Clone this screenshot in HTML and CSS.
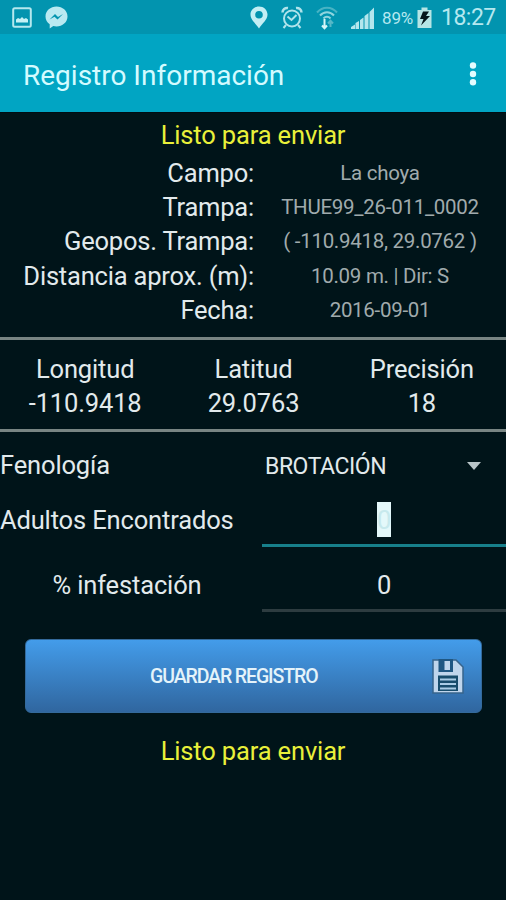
FILE: index.html
```html
<!DOCTYPE html>
<html lang="es">
	<head>
		<meta charset="utf-8">
		<title>Registro Información</title>
		<link rel="stylesheet" href="styles.css">
	</head>
	<body>
		<div class="statusBar">
			<svg class="picture" width="20" height="21" viewBox="0 0 20 21">
				<rect x="1.2" y="1.2" width="17.6" height="18.6" rx="1.5" fill="none" stroke="#b5e8ee" stroke-width="2"/>
				<path d="M4 15.500v-3l2-1.500 2 1 2-2 2 2 2-1 2 1.500v3z" fill="#c5f1f5"/>
			</svg>
			<svg class="messenger" width="23" height="23" viewBox="0 0 23 23">
				<path d="M11.500.5C5.500.5.500 4.800.500 10.400c0 3.200 1.600 6 4.200 7.800V22.500l3.600-2.500c1 .3 2 .4 3.200.4 6 0 11-4.400 11-10S17.500.5 11.500.5z" fill="#b9e9f1"/>
				<path d="M4.500 13.500l5.500-5.500 3 3 5-3-5.500 5.500-3-2.800z" fill="#0294af"/>
			</svg>
			<div class="spacer"></div>
			<svg class="pin" width="18" height="23" viewBox="0 0 18 23">
				<path fill-rule="evenodd" d="M9 .5C4.200.5.500 4 .500 8.600.500 14 5.500 17 9 22.500c3.500-5.500 8.500-8.500 8.500-13.900C17.500 4 13.800.5 9 .5zM9 5a3.800 3.800 0 1 1 0 7.600A3.800 3.800 0 0 1 9 5z" fill="#c3eef4"/>
			</svg>
			<svg class="alarm" width="22" height="23" viewBox="0 0 22 23" fill="none" stroke="#b0e3eb" stroke-width="2">
				<circle cx="11" cy="12.500" r="8"/>
				<path d="M1.500 6.500C1.500 3.500 4 1.500 7 2M20.500 6.500C20.500 3.500 18 1.500 15 2" stroke-width="2.500"/>
				<path d="M6.500 10.500l4 3.500 5-5M5 19l-2.500 3M17 19l2.500 3"/>
			</svg>
			<svg class="wifi" width="22" height="24" viewBox="0 0 22 24" fill="none" stroke="#8fd5df" stroke-width="2">
				<path d="M1 6.500C6.500 0 15.500 0 21 6.500" stroke="#48b3c4"/>
				<path d="M4 9.500C8 5 14 5 18 9.500M7.500 12.500c2-2.200 5-2.200 7 0"/>
				<path d="M8.500 13v9M6 19.500l2.500 2.700 2.500-2.700" stroke="#d5f6f8"/>
				<path d="M14.500 21v-6M12 17.500l2.500-2.700 2.500 2.700" stroke="#57b8c7"/>
			</svg>
			<svg class="signal" width="23" height="22" viewBox="0 0 23 22">
				<path d="M0 22v-2l4-2.500V22zM4.500 22v-6l3.500-2v8zM9 22v-9l3.500-2.500V22zM13.500 22V9L17.500 6v16zM18.500 22V5L23 .5V22z" fill="#b3e6ed"/>
			</svg>
			<span class="percent">89%</span>
			<svg class="battery" width="15" height="21" viewBox="0 0 15 21">
				<path d="M.500 3h4V.500h6V3h4v18H.500z" fill="#b5e5e5"/>
				<path d="M6 4.500h6L9 9h4L4 18.500 6.500 12H3z" fill="#05171c"/>
			</svg>
			<span class="clock">18:27</span>
		</div>
		<div class="toolbar">
			<h1 class="title">Registro Información</h1>
			<svg width="8" height="24" viewBox="0 0 8 24" fill="#e4fcff">
				<circle cx="4" cy="3.500" r="3.200"/>
				<circle cx="4" cy="12" r="3.200"/>
				<circle cx="4" cy="20.300" r="3.200"/>
			</svg>
		</div>

		<div class="message">Listo para enviar</div>
		<div class="info">
			<div class="label">Campo:</div>
			<div class="value">La choya</div>
			<div class="label">Trampa:</div>
			<div class="value">THUE99_26-011_0002</div>
			<div class="label">Geopos. Trampa:</div>
			<div class="value">( -110.9418, 29.0762 )</div>
			<div class="label">Distancia aprox. (m):</div>
			<div class="value">10.09 m. | Dir: S</div>
			<div class="label">Fecha:</div>
			<div class="value">2016-09-01</div>
		</div>

		<div class="position">
			<div>Longitud<br>-110.9418</div>
			<div>Latitud<br>29.0763</div>
			<div>Precisión<br>18</div>
		</div>

		<div class="form">
			<div class="row fenologia">
				<div class="name">Fenología</div>
				<div class="spinner">
					<span>BROTACIÓN</span>
					<div class="arrow"></div>
				</div>
			</div>
			<div class="row adultos">
				<div class="name">Adultos Encontrados</div>
				<div class="field focused"><span class="selected">0</span></div>
			</div>
			<div class="row infestacion">
				<div class="name centered">% infestación</div>
				<div class="field"><span>0</span></div>
			</div>
		</div>

		<button class="save" type="button">
			<span>GUARDAR REGISTRO</span>
			<svg width="32" height="35" viewBox="0 0 32 35">
				<path d="M1 1h23l7 7v26H1z" fill="#bfd5ec" stroke="#37648c" stroke-width="1.500"/>
				<path d="M6.500 0H21v13H6.500z" fill="#1f5783"/>
				<path d="M12.500 2h5.500v9h-5.500z" fill="#bfd5ec"/>
				<path d="M6 16.500h20V32H6z" fill="#174c6c"/>
				<path d="M8 20.500h16M8 25h16M8 29.500h16" stroke="#a9cce6" stroke-width="1.800"/>
			</svg>
		</button>
		<div class="message bottom">Listo para enviar</div>
	</body>
</html>
```

FILE: styles.css
```css
html, body {
	margin: 0;
	padding: 0;
	width: 100%;
	height: 100%;
	background: #001419;
	color: #e2eaec;
	font-family: Roboto, sans-serif;
	font-size: 25.5px;
	letter-spacing: -0.15px;
	overflow: hidden;
}

svg {
	display: block;
	flex: none;
}

.statusBar {
	display: flex;
	align-items: center;
	box-sizing: border-box;
	height: 34px;
	padding: 1px 10px 0 12px;
	background: #0294af;
	color: #b5e8ef;
}

.messenger {
	margin-left: 13px;
}

.spacer {
	flex: 1;
}

.alarm {
	margin-left: 13px;
}

.wifi {
	margin-left: 13px;
}

.signal {
	margin-left: 13px;
}

.percent {
	width: 32px;
	margin-left: 8px;
	font-size: 17px;
	white-space: nowrap;
}

.battery {
	margin-left: 3px;
}

.clock {
	width: 55px;
	margin-left: 9px;
	font-size: 23px;
	letter-spacing: -0.5px;
	white-space: nowrap;
}

.toolbar {
	display: flex;
	align-items: center;
	justify-content: space-between;
	box-sizing: border-box;
	height: 79px;
	padding: 1px 29px 0 23px;
	background: #01a5c3;
	border-bottom: 1px solid #000d12;
}

.title {
	margin: 0;
	padding-top: 3px;
	color: #d4fbff;
	font-size: 28px;
	font-weight: normal;
	letter-spacing: 0;
}

.message {
	height: 44px;
	color: #e9f03a;
	line-height: 45px;
	text-align: center;
}

.info {
	display: grid;
	grid-template-columns: 254px 1fr;
	grid-auto-rows: 34.200px;
	height: 180px;
	line-height: 33px;
}

.label {
	text-align: right;
	letter-spacing: -0.2px;
}

.value {
	color: #a0abad;
	font-size: 20.500px;
	letter-spacing: -0.28px;
	line-height: 33px;
	text-align: center;
}

.position {
	display: flex;
	box-sizing: border-box;
	height: 95px;
	padding: 12px 0 0 1px;
	border: solid #788583;
	border-width: 3px 0;
	line-height: 34px;
	text-align: center;
}

.position div {
	flex: 1;
}

.row {
	display: flex;
}

.name {
	width: 262px;
	white-space: nowrap;
}

.centered {
	box-sizing: border-box;
	padding-right: 8px;
	text-align: center;
}

.fenologia {
	height: 66px;
	line-height: 67px;
}

.spinner {
	display: flex;
	flex: 1;
	align-items: center;
	justify-content: space-between;
	padding: 2px 25px 0 3px;
	font-size: 23px;
	letter-spacing: -0.45px;
}

.arrow {
	border: solid transparent;
	border-width: 8px 7px 0;
	border-top-color: #b8c5c8;
}

.adultos {
	height: 49px;
	line-height: 45px;
}

.infestacion {
	height: 65px;
	line-height: 77px;
}

.field {
	flex: 1;
	border-bottom: 3px solid #2d3c40;
	text-align: center;
}

.focused {
	border-color: #17808b;
}

.selected {
	display: inline-block;
	height: 35px;
	background: #e4f8fa;
	color: #c7e9ed;
	line-height: 36px;
}

.save {
	display: flex;
	align-items: center;
	box-sizing: border-box;
	width: 457px;
	height: 74px;
	margin: 27px 0 0 25px;
	padding: 0 17px 0 124px;
	border: 1px solid #346a9b;
	border-radius: 6px;
	background: linear-gradient(#439cea, #30669f);
	color: #e4f3fa;
	font: 500 19.500px Roboto, sans-serif;
	letter-spacing: -1.1px;
}

.save span {
	flex: 1;
	padding-top: 1px;
	text-align: left;
	white-space: nowrap;
}

.bottom {
	margin-top: 16px;
}
```
